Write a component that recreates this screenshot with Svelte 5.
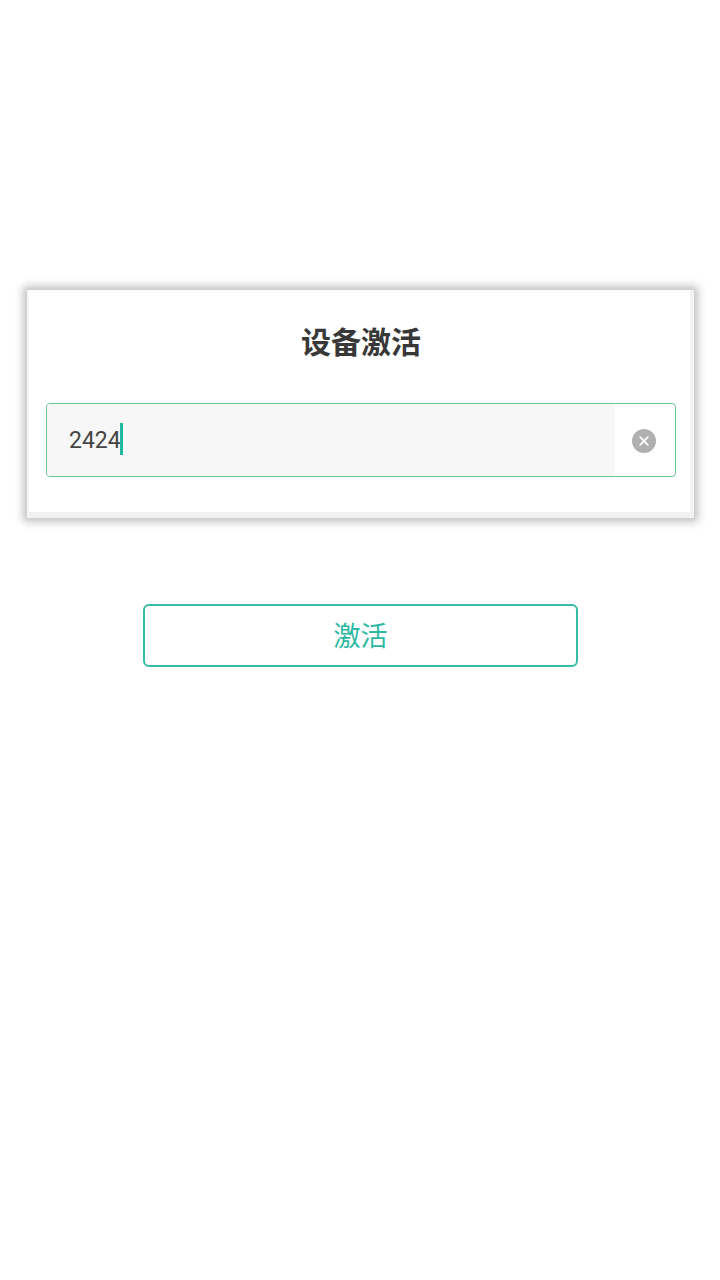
<script>
	let code = '2424';
</script>

<div class="page">
	<section class="card">
		<h1 class="title">设备激活</h1>
		<div class="field">
			<div class="input">
				<span class="value">{code}</span>
				<span class="caret"></span>
			</div>
			<div class="clear-wrap">
				<svg class="clear" width="24" height="24" viewBox="0 0 24 24">
					<circle cx="12" cy="12" r="12" fill="#b0b0b0" />
					<path d="M8.2 8.2l7.6 7.6M15.8 8.2l-7.6 7.6" stroke="#fff" stroke-width="1.8" stroke-linecap="round" />
				</svg>
			</div>
		</div>
	</section>
	<button class="activate">激活</button>
</div>

<style>
	:global(body) {
		margin: 0;
		background: #fff;
	}

	.page {
		height: 1280px;
		padding-top: 290px;
		box-sizing: border-box;
		font-family: Roboto, "Noto Sans CJK SC", sans-serif;
		color: #333;
	}

	.card {
		box-sizing: border-box;
		width: 667px;
		height: 228px;
		margin-left: 27px;
		padding: 0 14px 0 17px;
		background: #fff;
		border-left: 2px solid #f6f6f6;
		border-right: 4px solid #f2f2f2;
		border-bottom: 6px solid #f2f2f2;
		box-shadow: 0 0 8px 4px rgba(0, 0, 0, 0.24);
	}

	.title {
		margin: 0;
		padding-top: 33px;
		height: 81px;
		box-sizing: border-box;
		font-size: 30px;
		line-height: 40px;
		font-weight: 700;
		text-align: center;
		color: #383838;
	}

	.field {
		display: flex;
		box-sizing: border-box;
		width: 630px;
		height: 74px;
		margin-top: 32px;
		border: 1px solid #6cc596;
		border-radius: 4px;
		overflow: hidden;
	}

	.input {
		display: flex;
		align-items: center;
		width: 568px;
		padding-left: 22px;
		box-sizing: border-box;
		background: #f7f7f7;
	}

	.value {
		margin-top: 2px;
		font-size: 23px;
		line-height: 32px;
		color: #444;
	}

	.caret {
		width: 3px;
		height: 32px;
		margin: 0 0 2px -1px;
		background: #22b8a0;
	}

	.clear-wrap {
		flex: 1;
		display: flex;
		align-items: center;
		justify-content: center;
		padding: 1px 2px 0 0;
	}

	.clear {
		display: block;
	}

	.activate {
		display: block;
		box-sizing: border-box;
		width: 435px;
		height: 63px;
		margin: 86px 0 0 143px;
		padding: 0 0 2px;
		background: #fff;
		border: 2px solid #35bca7;
		border-radius: 6px;
		font-family: inherit;
		font-size: 27px;
		color: #2bb9a3;
	}
</style>
